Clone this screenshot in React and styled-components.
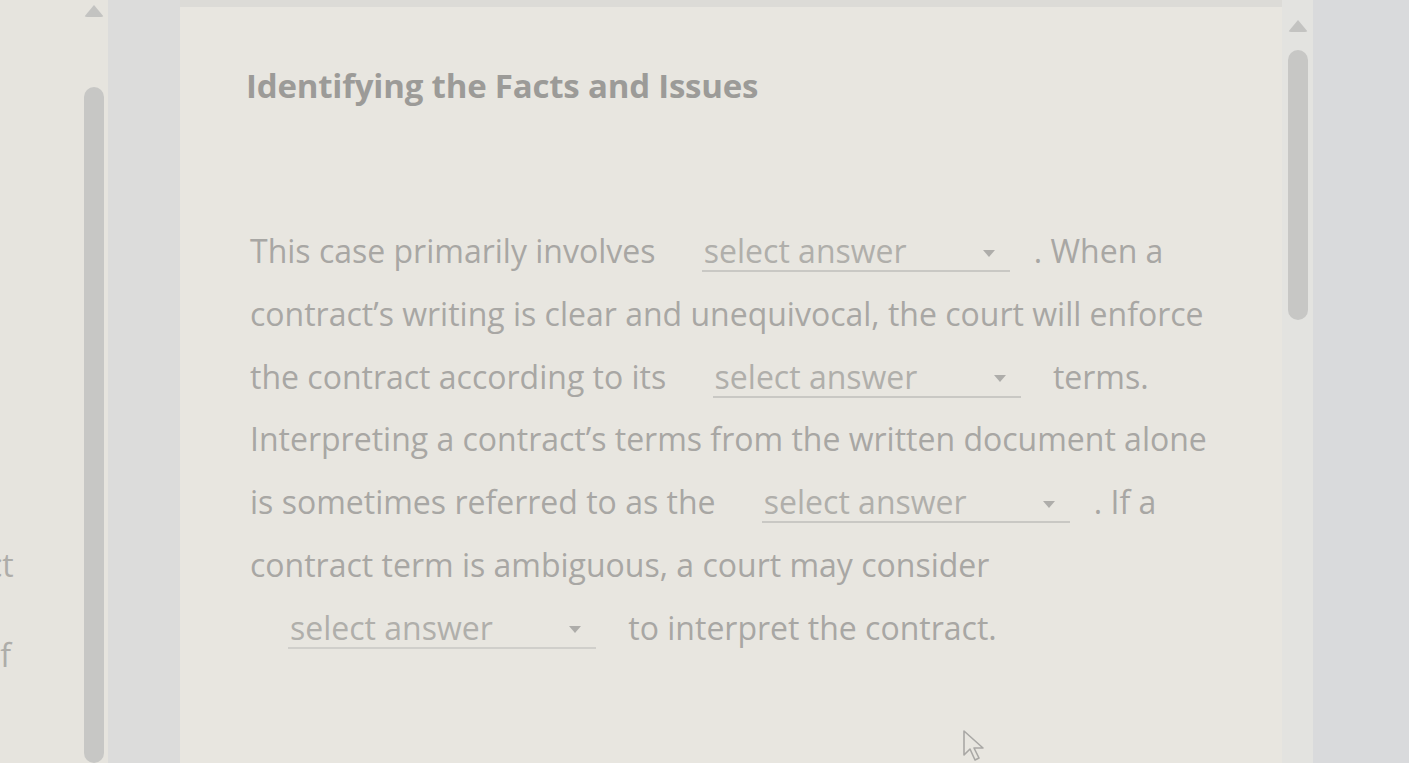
import React from "react";
import styled, { createGlobalStyle } from "styled-components";

const Global = createGlobalStyle`
  html, body { margin: 0; padding: 0; }
  body { font-family: "Open Sans", "Noto Sans", sans-serif; background: #e6e4de; }
  * { box-sizing: border-box; }
`;

const Screen = styled.div`
  display: flex;
  width: 1409px;
  height: 763px;
  overflow: hidden;
  position: relative;
  background: #e6e4de;
`;

const LeftPane = styled.div`
  width: 108px;
  display: flex;
  background: #e6e4de;
`;

const LeftText = styled.div`
  flex: 1;
  overflow: hidden;
  padding-top: 520px;
  font-size: 32px;
  color: #aeada9;
  line-height: 90px;
  white-space: nowrap;
`;

const LeftLine = styled.div`
  text-indent: ${(p) => p.$indent}px;
`;

const Rail = styled.div`
  width: ${(p) => p.$w}px;
  display: flex;
  flex-direction: column;
  align-items: center;
  padding-top: ${(p) => p.$top}px;
  background: ${(p) => p.$bg};
`;

const Arrow = styled.div`
  width: 0;
  height: 0;
  border-left: 10px solid transparent;
  border-right: 10px solid transparent;
  border-bottom: 12px solid #c3c3c1;
  border-radius: 3px;
  margin-bottom: ${(p) => p.$gap}px;
`;

const Thumb = styled.div`
  width: 20px;
  height: ${(p) => p.$h}px;
  background: #c7c7c5;
  border-radius: 10px;
`;

const Gutter = styled.div`
  width: ${(p) => p.$w}px;
  background: ${(p) => p.$bg};
`;

const Panel = styled.main`
  width: 1102px;
  background: #e8e6e0;
  border-top: 7px solid #dcdbd7;
  padding: 56px 0 0 66px;
`;

const Title = styled.h1`
  margin: 0;
  font-size: 33px;
  font-weight: 700;
  color: #9c9b98;
  line-height: 45px;
  letter-spacing: -0.2px;
`;

const Body = styled.p`
  margin: 112px 0 0 4px;
  font-size: 32px;
  line-height: 62.8px;
  color: #a8a7a4;
  white-space: nowrap;
`;

const Select = styled.span`
  display: inline-flex;
  align-items: baseline;
  justify-content: space-between;
  width: 308px;
  margin: 0 24px 0 ${(p) => p.$ml}px;
  padding: 0 15px 0 2px;
  border-bottom: 2px solid ${(p) => (p.$faint ? "#d0cfcb" : "#c9c8c4")};
  color: #b0afab;
  line-height: 38px;
  font-size: 32px;
`;

const Caret = styled.span`
  align-self: center;
  width: 0;
  height: 0;
  border-left: 6px solid transparent;
  border-right: 6px solid transparent;
  border-top: 7px solid #aeadaa;
  margin-top: 4px;
`;

const Cursor = styled.svg`
  position: absolute;
  left: 962px;
  top: 729px;
`;

const Dropdown = ({ ml = 38, faint }) => (
  <Select $ml={ml} $faint={faint} role="combobox">
    select answer
    <Caret />
  </Select>
);

export default function App() {
  return (
    <>
      <Global />
      <Screen>
        <LeftPane>
          <LeftText>
            <LeftLine $indent={-13}>ct</LeftLine>
            <LeftLine $indent={-19}>of</LeftLine>
          </LeftText>
          <Rail $w={28} $top={5} $bg="#e6e4de">
            <Arrow $gap={70} />
            <Thumb $h={690} />
          </Rail>
        </LeftPane>
        <Gutter $w={72} $bg="#dcdcdb" />
        <Panel>
          <Title>Identifying the Facts and Issues</Title>
          <Body>
            This case primarily involves <Dropdown />. When a
            <br />
            contract’s writing is clear and unequivocal, the court will enforce
            <br />
            the contract according to its <Dropdown /> terms.
            <br />
            Interpreting a contract’s terms from the written document alone
            <br />
            is sometimes referred to as the <Dropdown />. If a
            <br />
            contract term is ambiguous, a court may consider
            <br />
            <Dropdown ml={38} faint /> to interpret the contract.
          </Body>
        </Panel>
        <Rail $w={31} $top={20} $bg="#e3e3e0">
          <Arrow $gap={18} />
          <Thumb $h={270} />
        </Rail>
        <Gutter $w={96} $bg="#d9dadc" />
        <Cursor width="26" height="36" viewBox="0 0 26 36">
          <path
            d="M2 2 L2 26 L8 20 L13 31 L17 29 L12 19 L21 19 Z"
            fill="none"
            stroke="#a9a8a5"
            strokeWidth="1.6"
            strokeLinejoin="round"
          />
        </Cursor>
      </Screen>
    </>
  );
}
